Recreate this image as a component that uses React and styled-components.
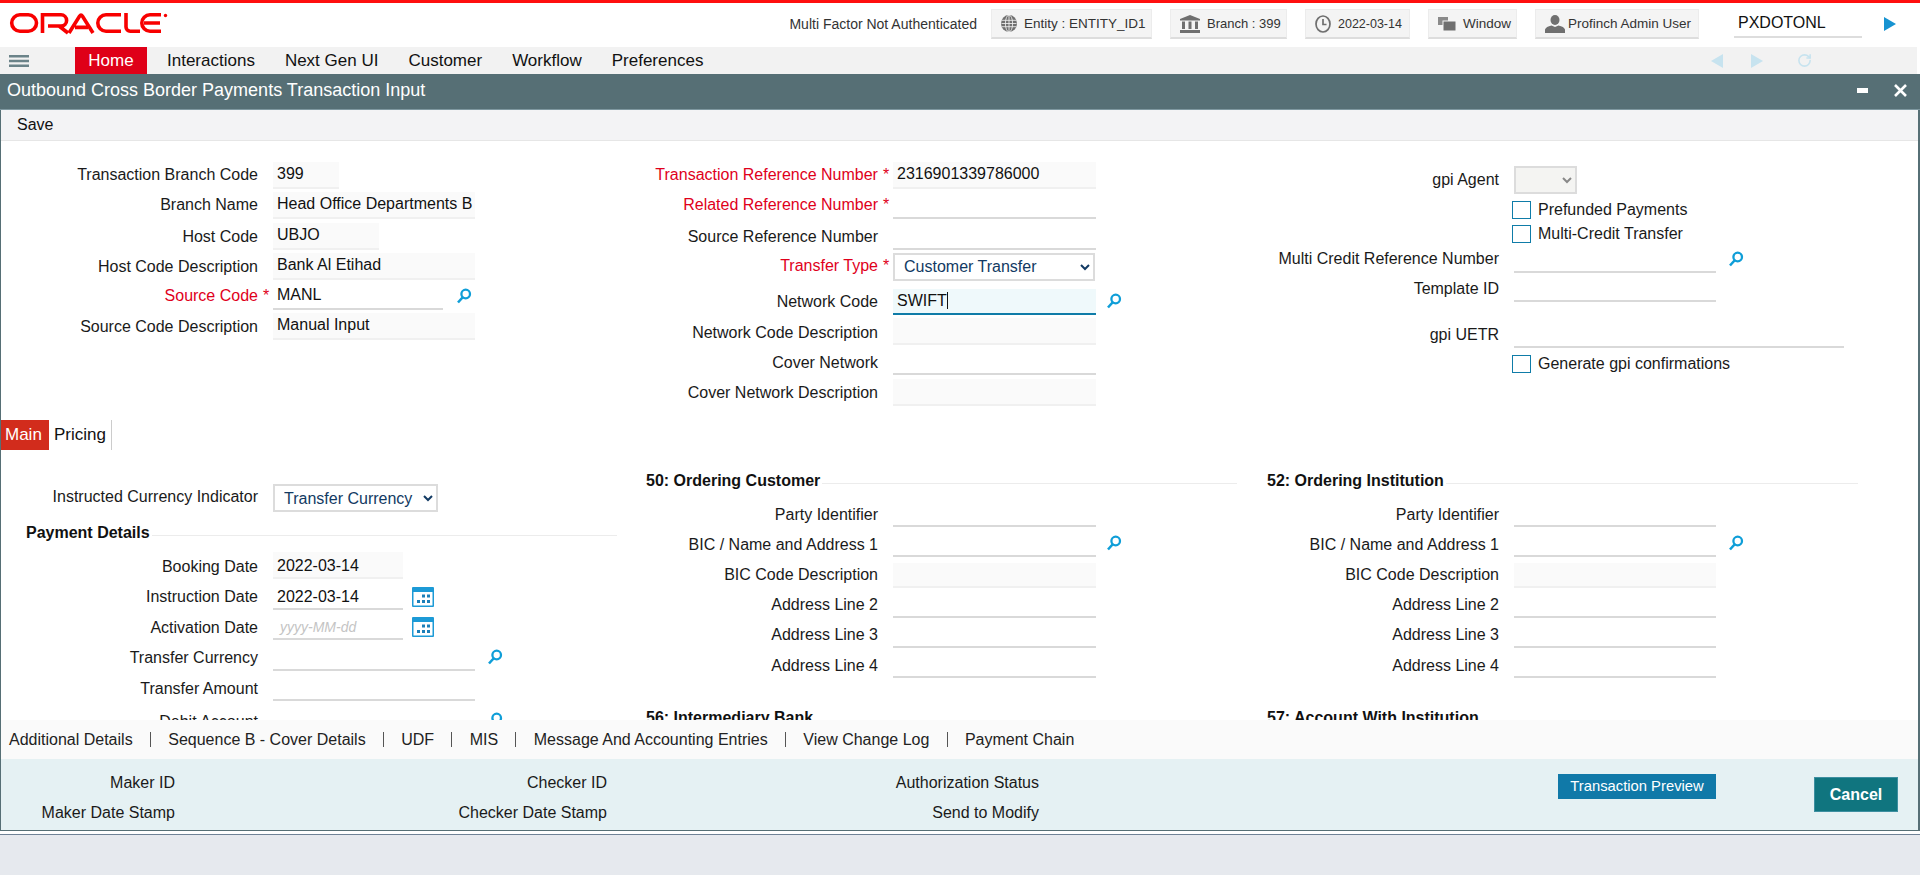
import React from "react";
import styled, { createGlobalStyle } from "styled-components";
import { RotateCw } from "lucide-react";

const GlobalStyle = createGlobalStyle`
  html, body {
    margin: 0;
    padding: 0;
    background: #fff;
    overflow: hidden;
  }
  body {
    font-family: "Liberation Sans", Arial, sans-serif;
    font-size: 16px;
    color: #111;
  }
  * {
    box-sizing: border-box;
  }
`;

const OracleLogo = () => (
  <LogoSvg viewBox="0 0 170 30" width="170" height="30">
    <g fill="none" stroke="#f80000" strokeWidth="3.6">
      <rect x="7.7" y="5.8" width="24.8" height="16.4" rx="8.2" />
      <path d="M38.5 24V5.8H57a5.6 5.6 0 0 1 0 11.2H44M55 17l9 7" />
      <path d="M65 24L75.5 7.2Q77 5 78.5 7.2L89 24M71 18.4H84" />
      <path d="M117 5.8H102a8.2 8.2 0 0 0 0 16.4H117" />
      <path d="M122 4V18a4.2 4.2 0 0 0 4.2 4.2H136" />
      <path d="M157 5.8H146a8.2 8.2 0 0 0 0 16.4H157M140 14H156" />
    </g>
    <circle cx="161.500" cy="6.500" r="1.700" fill="#f80000" />
  </LogoSvg>
);

const GlobeIcon = () => (
  <svg width="16" height="17" viewBox="0 0 16 16" preserveAspectRatio="none">
    <circle cx="8" cy="8" r="8" fill="#6f6f6f" />
    <g fill="none" stroke="#f4f4f4" strokeWidth="0.8">
      <ellipse cx="8" cy="8" rx="3.600" ry="8" />
      <path d="M8 0V16M0.500 5H15.500M0.500 8H15.500M0.500 11H15.500" />
    </g>
  </svg>
);

const BankIcon = () => (
  <svg width="20" height="18" viewBox="0 0 20 18" fill="#6f6f6f">
    <path d="M10 0L20 4V5.500H0V4Z" />
    <path d="M2 6.500H5V14H2ZM8.500 6.500H11.500V14H8.500ZM15 6.500H18V14H15Z" />
    <path d="M0 15H20V18H0Z" />
  </svg>
);

const ClockIcon = () => (
  <svg width="16" height="18" viewBox="0 0 16 18" fill="none" stroke="#6f6f6f" strokeWidth="1.700">
    <ellipse cx="8" cy="9" rx="7" ry="8" />
    <path d="M8 4V9.500H11.500" />
  </svg>
);

const WindowIcon = () => (
  <svg width="18" height="14" viewBox="0 0 18 14">
    <rect x="0" y="0" width="10" height="8" fill="#8a8a8a" />
    <rect x="5" y="4" width="13" height="10" fill="#6f6f6f" stroke="#f4f4f4" />
  </svg>
);

const UserIcon = () => (
  <svg width="20" height="18" viewBox="0 0 20 18" fill="#6f6f6f">
    <ellipse cx="10" cy="5" rx="4.500" ry="5" />
    <path d="M0 18V14.500Q1 11.500 6.500 10.500L10 12L13.500 10.500Q19 11.500 20 14.500V18Z" />
  </svg>
);

const SearchIcon = () => (
  <svg width="16" height="16" viewBox="0 0 16 16" fill="none" stroke="#0f9ed8">
    <circle cx="9.700" cy="6" r="4.300" strokeWidth="2.300" />
    <path d="M6.500 9.500L2 14.500" strokeWidth="2.600" />
  </svg>
);

const CalendarIcon = () => (
  <svg width="22" height="20" viewBox="0 0 22 20">
    <rect width="22" height="20" rx="1" fill="#1c9ad6" />
    <rect x="1.500" y="5" width="19" height="13.500" fill="#fff" />
    <g fill="#1c7fb8">
      <rect x="10" y="7.500" width="3" height="3" />
      <rect x="15" y="7.500" width="3" height="3" />
      <rect x="5" y="13" width="3" height="3" />
      <rect x="10" y="13" width="3" height="3" />
      <rect x="15" y="13" width="3" height="3" />
    </g>
  </svg>
);

const Lookup = ({ gap }) => (
  <LookupButton $gap={gap}>
    <SearchIcon />
  </LookupButton>
);

const FormRow = ({ label, required, h, lift, children }) => (
  <Row $h={h}>
    <Label $required={required} $lift={lift}>
      {label}
      {required && <Star>*</Star>}
    </Label>
    {children}
  </Row>
);

const App = () => (
  <Page>
    <GlobalStyle />
    <RedBar />
    <Header>
      <OracleLogo />
      <Tools>
        <AuthNote>Multi Factor Not Authenticated</AuthNote>
        <Pill $w={161}>
          <GlobeIcon />
          Entity : ENTITY_ID1
        </Pill>
        <Pill $w={117} $size={13}>
          <BankIcon />
          Branch : 399
        </Pill>
        <Pill $w={105} $size={12.500}>
          <ClockIcon />
          2022-03-14
        </Pill>
        <Pill $w={89}>
          <WindowIcon />
          Window
        </Pill>
        <Pill $w={164} $gap={3}>
          <UserIcon />
          Profinch Admin User
        </Pill>
        <FunctionInput>PXDOTONL</FunctionInput>
        <GoArrow viewBox="0 0 12 14" width="12" height="14">
          <path d="M0 0L12 7L0 14Z" fill="#1793d1" />
        </GoArrow>
      </Tools>
    </Header>
    <Nav>
      <Burger viewBox="0 0 20 12" width="20" height="12">
        <path d="M0 0H20V2.500H0ZM0 4.800H20V7.300H0ZM0 9.500H20V12H0Z" fill="#6b8389" />
      </Burger>
      <HomeItem>Home</HomeItem>
      <MenuItem>Interactions</MenuItem>
      <MenuItem>Next Gen UI</MenuItem>
      <MenuItem>Customer</MenuItem>
      <MenuItem>Workflow</MenuItem>
      <MenuItem>Preferences</MenuItem>
      <NavTools>
        <svg width="12" height="14" viewBox="0 0 12 14">
          <path d="M12 0V14L0 7Z" fill="#c7e3ef" />
        </svg>
        <svg width="12" height="14" viewBox="0 0 12 14">
          <path d="M0 0V14L12 7Z" fill="#c7e3ef" />
        </svg>
        <RotateCw size={15} color="#c7e3ef" strokeWidth={2.500} />
      </NavTools>
    </Nav>
    <Window>
      <TitleBar>
        <Title>Outbound Cross Border Payments Transaction Input</Title>
        <WindowActions>
          <svg width="11" height="5" viewBox="0 0 11 5">
            <rect width="11" height="5" fill="#fff" />
          </svg>
          <svg width="13" height="13" viewBox="0 0 13 13">
            <path d="M1 1L12 12M12 1L1 12" stroke="#fff" strokeWidth="2.600" />
          </svg>
        </WindowActions>
      </TitleBar>
      <Toolbar>
        <SaveButton>Save</SaveButton>
      </Toolbar>
      <Content>
        <TopForm>
          <Column>
            <FormRow label="Transaction Branch Code">
              <Field $w={66} $readOnly>399</Field>
            </FormRow>
            <FormRow label="Branch Name">
              <Field $w={202} $readOnly>Head Office Departments B</Field>
            </FormRow>
            <FormRow label="Host Code" lift={-1}>
              <Field $w={106} $readOnly>UBJO</Field>
            </FormRow>
            <FormRow label="Host Code Description" lift={-1}>
              <Field $w={202} $readOnly>Bank Al Etihad</Field>
            </FormRow>
            <FormRow label="Source Code" required>
              <Field $w={170}>MANL</Field>
              <Lookup gap={13} />
            </FormRow>
            <FormRow label="Source Code Description" lift={-1}>
              <Field $w={202} $readOnly>Manual Input</Field>
            </FormRow>
          </Column>
          <Column>
            <FormRow label="Transaction Reference Number" required>
              <Field $w={203} $readOnly>2316901339786000</Field>
            </FormRow>
            <FormRow label="Related Reference Number" required>
              <Field $w={203} />
            </FormRow>
            <FormRow label="Source Reference Number" lift={-1}>
              <Field $w={203} />
            </FormRow>
            <FormRow label="Transfer Type" required h={31.400} lift={0.500}>
              <Select $w={202} defaultValue="Customer Transfer">
                <option>Customer Transfer</option>
              </Select>
            </FormRow>
            <FormRow label="Network Code" h={34} lift={-1.500}>
              <FocusedField>
                SWIFT
                <Caret />
              </FocusedField>
              <Lookup gap={10} />
            </FormRow>
            <FormRow label="Network Code Description" lift={-1.500}>
              <Field $w={203} $readOnly />
            </FormRow>
            <FormRow label="Cover Network" lift={-1.500}>
              <Field $w={203} />
            </FormRow>
            <FormRow label="Cover Network Description" lift={-1.500}>
              <Field $w={203} $readOnly />
            </FormRow>
          </Column>
          <Column>
            <FormRow label="gpi Agent" h={35} lift={0.500}>
              <Select $w={63} $disabled disabled />
            </FormRow>
            <CheckRow $h={25}>
              <Box />
              Prefunded Payments
            </CheckRow>
            <CheckRow $h={24}>
              <Box />
              Multi-Credit Transfer
            </CheckRow>
            <FormRow label="Multi Credit Reference Number">
              <Field $w={202} />
              <Lookup gap={12} />
            </FormRow>
            <FormRow label="Template ID" h={29} lift={-1}>
              <Field $w={202} />
            </FormRow>
            <FormRow label="gpi UETR" h={46} lift={-1}>
              <Field $w={330} />
            </FormRow>
            <CheckRow $h={25}>
              <Box />
              Generate gpi confirmations
            </CheckRow>
          </Column>
        </TopForm>
        <Tabs>
          <Tab $active>Main</Tab>
          <Tab>Pricing</Tab>
        </Tabs>
        <LowerForm>
          <Column $pad={24}>
            <FormRow label="Instructed Currency Indicator" h={38} lift={3}>
              <Select $w={165} defaultValue="Transfer Currency">
                <option>Transfer Currency</option>
              </Select>
            </FormRow>
            <SectionHead $top={11}>
              <span>Payment Details</span>
            </SectionHead>
            <FormRow label="Booking Date" h={30}>
              <Field $w={130} $readOnly>2022-03-14</Field>
            </FormRow>
            <FormRow label="Instruction Date" h={30.500}>
              <Field $w={130}>2022-03-14</Field>
              <DateButton>
                <CalendarIcon />
              </DateButton>
            </FormRow>
            <FormRow label="Activation Date" h={30.500}>
              <Field $w={130}>
                <Placeholder>yyyy-MM-dd</Placeholder>
              </Field>
              <DateButton>
                <CalendarIcon />
              </DateButton>
            </FormRow>
            <FormRow label="Transfer Currency" h={30.500}>
              <Field $w={202} />
              <Lookup gap={12} />
            </FormRow>
            <FormRow label="Transfer Amount" h={30.500}>
              <Field $w={202} />
            </FormRow>
            <FormRow label="Debit Account" h={33}>
              <Field $w={202} />
              <Lookup gap={12} />
            </FormRow>
          </Column>
          <Column $pad={21}>
            <SectionHead>
              <span>50: Ordering Customer</span>
            </SectionHead>
            <FormRow label="Party Identifier">
              <Field $w={203} />
            </FormRow>
            <FormRow label="BIC / Name and Address 1">
              <Field $w={203} />
              <Lookup gap={10} />
            </FormRow>
            <FormRow label="BIC Code Description">
              <Field $w={203} $h={25} $readOnly />
            </FormRow>
            <FormRow label="Address Line 2">
              <Field $w={203} />
            </FormRow>
            <FormRow label="Address Line 3">
              <Field $w={203} />
            </FormRow>
            <FormRow label="Address Line 4">
              <Field $w={203} />
            </FormRow>
            <SectionHead $top={30}>
              <span>56: Intermediary Bank</span>
            </SectionHead>
          </Column>
          <Column $pad={21}>
            <SectionHead>
              <span>52: Ordering Institution</span>
            </SectionHead>
            <FormRow label="Party Identifier">
              <Field $w={202} />
            </FormRow>
            <FormRow label="BIC / Name and Address 1">
              <Field $w={202} />
              <Lookup gap={12} />
            </FormRow>
            <FormRow label="BIC Code Description">
              <Field $w={202} $h={25} $readOnly />
            </FormRow>
            <FormRow label="Address Line 2">
              <Field $w={202} />
            </FormRow>
            <FormRow label="Address Line 3">
              <Field $w={202} />
            </FormRow>
            <FormRow label="Address Line 4">
              <Field $w={202} />
            </FormRow>
            <SectionHead $top={30}>
              <span>57: Account With Institution</span>
            </SectionHead>
          </Column>
        </LowerForm>
      </Content>
      <Links>
        <LinkItem>Additional Details</LinkItem>
        <Pipe />
        <LinkItem>Sequence B - Cover Details</LinkItem>
        <Pipe />
        <LinkItem>UDF</LinkItem>
        <Pipe />
        <LinkItem>MIS</LinkItem>
        <Pipe />
        <LinkItem>Message And Accounting Entries</LinkItem>
        <Pipe />
        <LinkItem>View Change Log</LinkItem>
        <Pipe />
        <LinkItem>Payment Chain</LinkItem>
      </Links>
      <Audit>
        <AuditGrid>
          <AuditLabel>Maker ID</AuditLabel>
          <AuditLabel>Checker ID</AuditLabel>
          <AuditLabel>Authorization Status</AuditLabel>
          <AuditLabel>Maker Date Stamp</AuditLabel>
          <AuditLabel>Checker Date Stamp</AuditLabel>
          <AuditLabel>Send to Modify</AuditLabel>
        </AuditGrid>
        <PreviewButton>Transaction Preview</PreviewButton>
        <CancelButton>Cancel</CancelButton>
      </Audit>
    </Window>
    <StatusBar />
  </Page>
);

const Page = styled.div`
  height: 875px;
  display: flex;
  flex-direction: column;
  overflow: hidden;
`;

const RedBar = styled.div`
  flex: none;
  height: 3px;
  background: #ff0f0f;
`;

const Header = styled.header`
  flex: none;
  height: 44px;
  display: flex;
  align-items: center;
  padding: 0 24px 0 4px;
`;

const LogoSvg = styled.svg`
  display: block;
  margin-top: -3px;
  filter: blur(0.3px);
`;

const Tools = styled.div`
  margin-left: auto;
  display: flex;
  align-items: center;
  gap: 18px;
  margin-top: -2px;
`;

const AuthNote = styled.span`
  font-size: 14px;
  color: #333;
  margin-right: -4px;
`;

const Pill = styled.div`
  width: ${(p) => p.$w}px;
  height: 30px;
  display: flex;
  align-items: center;
  gap: ${(p) => p.$gap || 7}px;
  padding-left: 9px;
  font-size: ${(p) => p.$size || 13.500}px;
  color: #333;
  white-space: nowrap;
  background: #f4f4f4;
  border: 1px solid #ececec;
  border-bottom: 2px solid #ddd;
`;

const FunctionInput = styled.div`
  width: 128px;
  height: 28px;
  margin-left: 17px;
  padding-left: 4px;
  line-height: 26px;
  font-size: 16px;
  color: #111;
  border-bottom: 2px solid #ddd;
`;

const GoArrow = styled.svg`
  display: block;
  margin-left: 4px;
`;

const Nav = styled.nav`
  flex: none;
  height: 27px;
  margin-right: 3px;
  display: flex;
  align-items: stretch;
  background: #f2f2f2;
`;

const Burger = styled.svg`
  align-self: center;
  margin-left: 9px;
  margin-right: 46px;
`;

const HomeItem = styled.div`
  width: 72px;
  margin-right: 5px;
  display: flex;
  align-items: center;
  justify-content: center;
  font-size: 17px;
  color: #fff;
  background: #df0018;
`;

const MenuItem = styled.div`
  display: flex;
  align-items: center;
  padding: 0 15px;
  font-size: 17px;
  color: #111;
`;

const NavTools = styled.div`
  margin-left: auto;
  margin-right: 105px;
  display: flex;
  align-items: center;
  gap: 28px;

  svg:last-child {
    margin-left: 6px;
  }
`;

const Window = styled.main`
  flex: none;
  height: 757px;
  display: flex;
  flex-direction: column;
  border: 1px solid #566f75;
  border-top: 0;
  border-right-width: 2px;
`;

const TitleBar = styled.div`
  flex: none;
  height: 36px;
  margin: 0 -2px 0 -1px;
  display: flex;
  align-items: center;
  justify-content: space-between;
  padding: 0 13px 2px 7px;
  background: #566f75;
  border-bottom: 1px solid #7f98a0;
`;

const Title = styled.h1`
  margin: 0;
  font-size: 18px;
  font-weight: normal;
  color: #fff;
`;

const WindowActions = styled.div`
  display: flex;
  align-items: center;
  gap: 26px;
`;

const Toolbar = styled.div`
  flex: none;
  height: 31px;
  display: flex;
  align-items: center;
  padding-left: 16px;
  background: #f3f3f5;
  border-bottom: 1px solid #e6e6e6;
`;

const SaveButton = styled.div`
  font-size: 16px;
  color: #111;
`;

const Content = styled.div`
  flex: 1;
  min-height: 0;
  overflow: hidden;
  background: #fff;
`;

const TopForm = styled.div`
  height: 279px;
  padding-top: 18px;
  display: grid;
  grid-template-columns: 620px 621px 1fr;
`;

const Column = styled.div`
  min-width: 0;
  padding-top: ${(p) => p.$pad || 0}px;
`;

const Row = styled.div`
  height: ${(p) => p.$h || 30.200}px;
  display: flex;
  align-items: flex-end;
`;

const Label = styled.div`
  flex: none;
  width: 257px;
  margin-right: 15px;
  margin-bottom: ${(p) => p.$lift || 0}px;
  height: 28px;
  line-height: 27px;
  text-align: right;
  white-space: nowrap;
  font-size: 16px;
  color: ${(p) => (p.$required ? "#e0001b" : "#1a1a1a")};
`;

const Star = styled.span`
  margin-left: 5px;
  margin-right: -11.200px;
`;

const Field = styled.div`
  flex: none;
  width: ${(p) => p.$w}px;
  height: ${(p) => p.$h || 27}px;
  padding-left: 4px;
  line-height: 24px;
  font-size: 16px;
  white-space: nowrap;
  overflow: hidden;
  color: #111;
  background: ${(p) => (p.$readOnly ? "#fafafa" : "#fff")};
  border-bottom: 2px solid ${(p) => (p.$readOnly ? "#f0f0f0" : "#d9d9d9")};
`;

const LowerForm = styled.div`
  display: grid;
  grid-template-columns: 620px 621px 1fr;

  ${Label} {
    height: 26.500px;
  }

  ${Field} {
    line-height: 27px;
  }
`;

const FocusedField = styled.div`
  flex: none;
  width: 203px;
  height: 26px;
  padding-left: 4px;
  line-height: 24px;
  font-size: 16px;
  color: #111;
  background: #eff9fb;
  border-bottom: 2px solid #0f7ca8;
`;

const Caret = styled.span`
  display: inline-block;
  width: 1px;
  height: 17px;
  vertical-align: -3px;
  background: #111;
`;

const Placeholder = styled.span`
  padding-left: 3px;
  font-size: 14px;
  font-style: italic;
  color: #c4c4c4;
`;

const Select = styled.select`
  flex: none;
  width: ${(p) => p.$w}px;
  height: 28px;
  padding: 0 0 0 5px;
  font-family: inherit;
  font-size: 16px;
  color: ${(p) => (p.$disabled ? "#888" : "#123a63")};
  background: ${(p) => (p.$disabled ? "#f4f4f2" : "#fff")};
  border: 2px solid #dcdcdc;
  border-radius: 0;
  outline: none;
  opacity: 1;
`;

const LookupButton = styled.div`
  display: flex;
  margin-left: ${(p) => p.$gap}px;
  margin-bottom: 6px;
`;

const DateButton = styled.div`
  display: flex;
  margin-left: 9px;
  margin-bottom: 3px;
`;

const CheckRow = styled.div`
  height: ${(p) => p.$h}px;
  display: flex;
  align-items: flex-end;
  gap: 7px;
  padding-left: 270px;
  font-size: 16px;
  line-height: 18px;
  color: #1a1a1a;
`;

const Box = styled.span`
  width: 19px;
  height: 18px;
  background: #fff;
  border: 1.500px solid #0f7ca8;
`;

const Tabs = styled.div`
  height: 30px;
  display: flex;
`;

const Tab = styled.div`
  display: flex;
  align-items: center;
  padding-left: ${(p) => (p.$active ? 4 : 5)}px;
  width: ${(p) => (p.$active ? 48 : 63)}px;
  font-size: 17px;
  color: ${(p) => (p.$active ? "#fff" : "#111")};
  background: ${(p) => (p.$active ? "#d22c1c" : "transparent")};
  border-right: ${(p) => (p.$active ? "0" : "1px solid #ccc")};
`;

const SectionHead = styled.div`
  display: flex;
  align-items: center;
  gap: 2px;
  width: 616px;
  height: 20px;
  margin-top: ${(p) => p.$top || 0}px;
  margin-bottom: 6px;
  padding-left: 25px;
  font-size: 16px;
  font-weight: bold;
  color: #111;
  white-space: nowrap;

  &::after {
    content: "";
    flex: 1;
    height: 1px;
    margin-top: 4px;
    background: #ececec;
  }
`;

const Links = styled.div`
  flex: none;
  height: 39px;
  display: flex;
  align-items: center;
  padding-left: 8px;
  font-size: 16px;
  background: #fafafa;
`;

const LinkItem = styled.span`
  color: #222;
  white-space: nowrap;
`;

const Pipe = styled.span`
  width: 1px;
  height: 15px;
  margin: 0 17.300px;
  background: #555;
`;

const Audit = styled.div`
  flex: none;
  height: 71px;
  display: flex;
  align-items: flex-start;
  background: #e5f1f3;
`;

const AuditGrid = styled.div`
  display: grid;
  grid-template-columns: 174px 432px 432px;
  grid-auto-rows: 29.500px;
  padding-top: 9px;
`;

const AuditLabel = styled.div`
  line-height: 29.500px;
  text-align: right;
  font-size: 16px;
  color: #1a1a1a;
`;

const PreviewButton = styled.div`
  width: 158px;
  height: 25px;
  margin: 15px 0 0 519px;
  line-height: 24px;
  text-align: center;
  font-size: 14.800px;
  color: #fff;
  background: #1079a8;
`;

const CancelButton = styled.div`
  width: 84px;
  height: 35px;
  margin: 18px 0 0 98px;
  line-height: 33px;
  text-align: center;
  font-size: 16px;
  font-weight: bold;
  color: #fff;
  background: #10757f;
  border: 1px solid #3d8fa0;
`;

const StatusBar = styled.footer`
  flex: 1;
  margin-top: 3px;
  background: #e6e9ee;
  border-top: 1px solid #6f8296;
`;

export default App;
